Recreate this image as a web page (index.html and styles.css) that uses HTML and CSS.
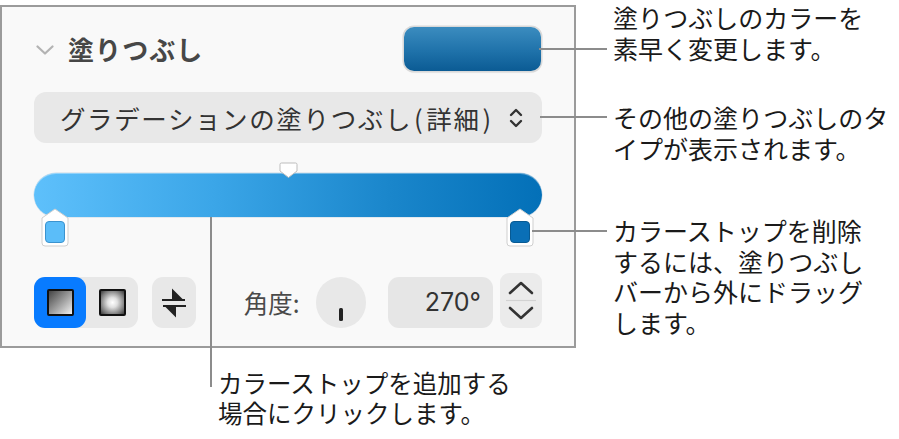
FILE: index.html
```html
<!DOCTYPE html>
<html lang="ja">
<head>
<meta charset="utf-8">
<title>塗りつぶし</title>
<link rel="stylesheet" href="styles.css">
</head>
<body>
<div class="canvas">
  <section class="panel">
    <div class="header">
      <svg class="disclosure" width="18" height="10" viewBox="0 0 18 10"><polyline points="1.5,1.5 9,8.5 16.5,1.5" fill="none" stroke="#b3b3b3" stroke-width="2.2" stroke-linecap="round" stroke-linejoin="round"/></svg>
      <h2 class="title">塗りつぶし</h2>
      <div class="well"></div>
    </div>
    <div class="popup">
      <span class="popup-text">グラデーションの塗りつぶし<span class="paren">(</span>詳細<span class="paren">)</span></span>
      <svg class="popup-arrows" width="14" height="22" viewBox="0 0 14 22"><polyline points="2,8 7,3 12,8" fill="none" stroke="#333" stroke-width="2.4" stroke-linecap="round" stroke-linejoin="round"/><polyline points="2,14 7,19 12,14" fill="none" stroke="#333" stroke-width="2.4" stroke-linecap="round" stroke-linejoin="round"/></svg>
    </div>
    <div class="gradient-block">
      <div class="bar"></div>
      <svg class="mid-marker" width="19" height="17" viewBox="0 0 19 17"><path d="M2.5,1 H16.5 Q18,1 18,2.5 V9 L9.5,15.5 L1,9 V2.5 Q1,1 2.5,1 Z" fill="#fff" stroke="#bdbdbd" stroke-width="1"/></svg>
      <svg class="stop stop-left" width="28" height="39" viewBox="0 0 28 39"><path d="M14,1 L27,10 V35 Q27,38 24,38 H4 Q1,38 1,35 V10 Z" fill="#fff" stroke="#cfcfcf" stroke-width="1"/><rect x="4.5" y="13.5" width="19" height="21" rx="3.5" fill="#5bbdf9" stroke="#3b93cf" stroke-width="1"/></svg>
      <svg class="stop stop-right" width="28" height="39" viewBox="0 0 28 39"><path d="M14,1 L27,10 V35 Q27,38 24,38 H4 Q1,38 1,35 V10 Z" fill="#fff" stroke="#cfcfcf" stroke-width="1"/><rect x="4.5" y="13.5" width="19" height="21" rx="3.5" fill="#0a6fb6" stroke="#085a93" stroke-width="1"/></svg>
    </div>
    <div class="controls">
      <div class="segmented">
        <div class="seg seg-on"><span class="swatch swatch-linear"></span></div>
        <div class="seg"><span class="swatch swatch-radial"></span></div>
      </div>
      <div class="swap">
        <svg width="26" height="30" viewBox="0 0 26 30"><path d="M1,11 H24 V13 H1 Z" fill="#222"/><path d="M11,0.5 V11 H21.5 Z" fill="#222"/><path d="M2,17 H25 V19 H2 Z" fill="#222"/><path d="M15,29.5 V19 H4.5 Z" fill="#222"/></svg>
      </div>
      <span class="angle-label">角度:</span>
      <div class="knob"><span class="knob-mark"></span></div>
      <div class="field">270°</div>
      <div class="stepper">
        <svg width="42" height="55" viewBox="0 0 42 55"><polyline points="10,20 21,10 32,20" fill="none" stroke="#333" stroke-width="2.6" stroke-linecap="round" stroke-linejoin="round"/><line x1="6" y1="27.5" x2="36" y2="27.5" stroke="#d2d2d2" stroke-width="1.2"/><polyline points="10,35 21,45 32,35" fill="none" stroke="#333" stroke-width="2.6" stroke-linecap="round" stroke-linejoin="round"/></svg>
      </div>
    </div>
  </section>

  <div class="leader leader-well"></div>
  <div class="leader leader-popup"></div>
  <div class="leader leader-stop"></div>
  <div class="leader leader-bar"></div>

  <div class="note note-well"><p class="line">塗りつぶしのカラーを</p><p class="line">素早く変更します。</p></div>
  <div class="note note-popup"><p class="line">その他の塗りつぶしのタ</p><p class="line">イプが表示されます。</p></div>
  <div class="note note-stop"><p class="line">カラーストップを削除</p><p class="line">するには、塗りつぶし</p><p class="line">バーから外にドラッグ</p><p class="line">します。</p></div>
  <div class="note note-bar"><p class="line">カラーストップを追加する</p><p class="line">場合にクリックします。</p></div>
</div>
</body>
</html>
```

FILE: styles.css
```css
* { box-sizing: border-box; }

html, body {
  margin: 0;
  padding: 0;
  background: #ffffff;
}

body {
  font-family: "Noto Sans CJK JP", "Noto Sans", sans-serif;
  color: #1a1a1a;
}

.canvas {
  position: relative;
  width: 899px;
  height: 439px;
  overflow: hidden;
}

.panel {
  margin-top: 5px;
  width: 576px;
  height: 343px;
  border: 2px solid #9b9b9b;
  background: #f9f9f9;
  padding: 20px 32px 0 32px;
}

/* header */
.header {
  display: flex;
  align-items: center;
  height: 44px;
}

.disclosure {
  margin-left: 2px;
  margin-top: 2px;
}

.title {
  margin: 0 0 0 14px;
  font-size: 26px;
  font-weight: 700;
  color: #474747;
  letter-spacing: 1px;
  line-height: 44px;
}

.well {
  margin-left: auto;
  margin-right: 1px;
  width: 137px;
  height: 44px;
  border-radius: 10px;
  background: linear-gradient(to bottom, #3b8cbf 0%, #1f72aa 55%, #0b5b94 100%);
  box-shadow: 0 0 0 1.5px #d9d9d9, 0 1px 2px rgba(0,0,0,0.15);
}

/* popup */
.popup {
  margin-top: 21px;
  height: 51px;
  border-radius: 12px;
  background: #e8e8e8;
  display: flex;
  align-items: center;
  padding-left: 26px;
  padding-right: 19px;
}

.popup-text {
  font-size: 25.5px;
  color: #333;
  letter-spacing: 1.6px;
  line-height: 51px;
}

.paren {
  margin: 0 2px;
}

.popup-arrows {
  margin-left: auto;
  margin-top: 1px;
}

/* gradient */
.gradient-block {
  position: relative;
  margin-top: 20px;
  height: 83px;
  padding-top: 10px;
}

.bar {
  height: 44px;
  border-radius: 22px;
  background: linear-gradient(to right, #5ec0fb 0%, #3ba6e8 35%, #1a86cb 70%, #0370b8 100%);
  box-shadow: inset 0 1px 0 rgba(255,255,255,0.35), 0 0 0 0.5px #c9d9e6;
}

.mid-marker {
  position: absolute;
  left: 245px;
  top: -1px;
}

.stop {
  position: absolute;
  top: 45px;
}

.stop-left { left: 7px; }
.stop-right { left: 472px; }

/* controls */
.controls {
  margin-top: 27px;
  display: flex;
  align-items: flex-end;
  height: 55px;
}

.segmented {
  display: flex;
  width: 104px;
  height: 51px;
  border-radius: 11px;
  background: #e8e8e8;
}

.seg {
  width: 52px;
  height: 51px;
  display: flex;
  align-items: center;
  justify-content: center;
  border-radius: 11px;
}

.seg-on {
  background: #087bff;
}

.swatch {
  display: block;
  width: 27px;
  height: 27px;
  border: 2px solid #111;
  border-radius: 2px;
}

.swatch-linear {
  background: linear-gradient(135deg, #444 0%, #9a9a9a 50%, #f2f2f2 100%);
}

.swatch-radial {
  background: radial-gradient(circle at 50% 50%, #ffffff 0%, #e0e0e0 30%, #7a7a7a 75%, #3a3a3a 100%);
}

.swap {
  margin-left: 14px;
  width: 44px;
  height: 51px;
  border-radius: 11px;
  background: #e8e8e8;
  display: flex;
  align-items: center;
  justify-content: center;
}

.angle-label {
  margin-left: 48px;
  width: 62px;
  height: 51px;
  line-height: 51px;
  font-size: 24.5px;
  color: #4a4a4a;
}

.knob {
  margin-left: 10px;
  width: 51px;
  height: 51px;
  border-radius: 50%;
  background: #e8e8e8;
  display: flex;
  justify-content: center;
  align-items: flex-end;
  padding-bottom: 7px;
}

.knob-mark {
  display: block;
  width: 3.5px;
  height: 13px;
  border-radius: 1.5px;
  background: #222;
}

.field {
  margin-left: 22px;
  width: 105px;
  height: 51px;
  border-radius: 11px;
  background: #e6e6e6;
  text-align: right;
  padding-right: 12px;
  font-family: "Inter", "Noto Sans CJK JP", sans-serif;
  font-size: 25px;
  line-height: 51px;
  color: #333;
}

.stepper {
  margin-left: 7px;
  width: 42px;
  height: 55px;
  border-radius: 9px;
  background: #ebebeb;
}

.stepper svg { display: block; }

/* leader lines */
.leader {
  position: absolute;
  background: #8c8c8c;
}

.leader-well { left: 539px; top: 48px; width: 68px; height: 2px; }
.leader-popup { left: 540px; top: 116px; width: 67px; height: 2px; }
.leader-stop { left: 532px; top: 230px; width: 75px; height: 2px; }
.leader-bar { left: 210px; top: 217px; width: 2px; height: 170px; }

/* notes */
.note {
  position: absolute;
  display: flex;
  flex-direction: column;
  font-family: "Liberation Sans", "Noto Sans CJK JP", sans-serif;
  font-size: 25px;
  color: #1a1a1a;
  white-space: nowrap;
}

.line {
  margin: 0;
  height: 31px;
  line-height: 31px;
}

.note-well { left: 613px; top: 4px; }
.note-popup { left: 613px; top: 104px; }
.note-stop { left: 613px; top: 217px; }
.note-stop .line { height: 30.5px; line-height: 30.5px; }
.note-bar { left: 218px; top: 370px; font-size: 24.5px; }
.note-bar .line { height: 29.5px; line-height: 29.5px; }
```
